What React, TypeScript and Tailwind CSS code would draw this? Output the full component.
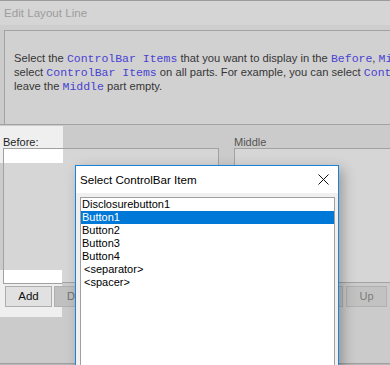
import React from 'react';

const Code = ({ children }: { children: React.ReactNode }) => (
  <span className="font-['Liberation_Mono','Courier_New',monospace] text-[11.5px] leading-none text-[#4a42d2]">{children}</span>
);

const items = ['Disclosurebutton1', 'Button1', 'Button2', 'Button3', 'Button4', '<separator>', '<spacer>'];

export default function App() {
  return (
    <div className="relative w-[390px] h-[365px] overflow-hidden bg-[#cbcbcb] font-['Liberation_Sans',Arial,sans-serif] flex flex-col">
      {/* dimmed window behind */}
      <div className="h-[25px] shrink-0 border-t border-[#9c9c9c] bg-[#d5d5d5] flex items-center pl-[4px] text-[11.6px] text-[#9d9d9d]">
        Edit Layout Line
      </div>
      <div className="h-[5px] shrink-0 bg-[#cecece]" />
      <div className="shrink-0 border-b border-[#a3a3a3]">
        <div className="ml-[4px] h-[94px] border-t border-l border-[#a3a3a3] bg-[#d1d1d1] pt-[20px] pl-[9px] text-[11.2px] leading-[14px] text-[#363636] whitespace-nowrap overflow-hidden">
          <div>
            Select the <Code>ControlBar Items</Code> that you want to display in the <Code>Before</Code>, <Code>Middle</Code> and <Code>After</Code> parts.
          </div>
          <div>
            select <Code>ControlBar Items</Code> on all parts. For example, you can select <Code>ControlBar Items</Code> for
          </div>
          <div>
            leave the <Code>Middle</Code> part empty.
          </div>
        </div>
      </div>

      <div className="flex px-[3px] pt-[11px] gap-[15px] shrink-0">
        <div className="w-[216px] shrink-0">
          <div className="h-[12px] leading-[12px] text-[11px] text-[#3a3a3a]">Before:</div>
          <div className="h-[135px] border border-[#a2a2a2] bg-[#d6d6d6]" />
          <div className="mt-[3px] ml-[2px] flex gap-[2px]">
            <div className="w-[47px] h-[21px] border border-[#ababab] bg-[#bfbfbf] flex items-center justify-center text-[11px] text-[#444]">Add</div>
            <div className="w-[58px] h-[21px] border border-[#b0b0b0] bg-[#c0c0c0] flex items-center justify-center text-[11px] text-[#6e6e6e]">Delete</div>
          </div>
        </div>
        <div className="w-[200px] shrink-0">
          <div className="h-[12px] leading-[12px] text-[11px] text-[#555]">Middle</div>
          <div className="h-[135px] border border-[#a2a2a2] bg-[#d6d6d6]" />
          <div className="mt-[3px] pl-[24px] flex gap-[3px]">
            {['Add', 'Delete', 'Up', 'Down'].map((b) => (
              <div key={b} className="w-[41px] h-[21px] shrink-0 border border-[#b0b0b0] bg-[#c2c2c2] flex items-center justify-center text-[11px] text-[#7c7c7c]">
                {b}
              </div>
            ))}
          </div>
        </div>
      </div>
      <div className="flex-1" />
      <div className="h-[2px] shrink-0 border-t border-[#a0a0a0] bg-[#b8b8b8]" />

      {/* spotlight over the Before label */}
      <div className="absolute left-0 top-[126px] w-[63px] h-[37px] bg-[#efefef] overflow-hidden pt-[10px] pl-[3px]">
        <div className="h-[12px] leading-[12px] text-[11px] text-[#1e1e1e]">Before:</div>
        <div className="h-[15px] w-[60px] border-l border-t border-[#a0a0a0] bg-white" />
      </div>

      {/* spotlight over the Add button */}
      <div className="absolute left-0 top-[270px] w-[62px] h-[47px] bg-[#efefef] overflow-hidden pl-[3px]">
        <div className="h-[14px] w-[59px] border-l border-b border-[#a0a0a0] bg-white" />
        <div className="mt-[2px] ml-[2px] flex gap-[2px]">
          <div className="w-[47px] h-[21px] shrink-0 border border-[#adadad] bg-[#e1e1e1] flex items-center justify-center text-[11.5px] text-[#111]">Add</div>
          <div className="w-[58px] h-[21px] shrink-0 border border-[#b0b0b0] bg-[#c0c0c0]" />
        </div>
      </div>

      {/* Select ControlBar Item dialog */}
      <div className="absolute left-[75px] top-[165px] w-[264px] h-[215px] border border-[#1883d7] bg-[#f0f0f0] shadow-[4px_4px_12px_rgba(0,0,0,0.28)] flex flex-col">
        <div className="h-[27px] shrink-0 bg-white flex items-center justify-between pl-[4px] pr-[9px]">
          <span className="text-[11.6px] text-black">Select ControlBar Item</span>
          <svg width="11" height="11" viewBox="0 0 11 11">
            <path d="M0.5 0.5 L10.5 10.5 M10.5 0.5 L0.5 10.5" stroke="#111" strokeWidth="1" />
          </svg>
        </div>
        <div className="h-[4px] shrink-0" />
        <div className="ml-[4px] mr-[3px] flex-1 border border-[#a0a0a0] bg-white">
          {items.map((it, i) => (
            <div
              key={it}
              className={
                i === 1
                  ? 'h-[13px] leading-[13px] pl-[1px] text-[11px] bg-[#0078d7] text-white'
                  : i >= 5
                    ? 'h-[13px] leading-[13px] pl-[3px] text-[11px] text-black'
                    : 'h-[13px] leading-[13px] pl-[1px] text-[11px] text-black'
              }
            >
              {it}
            </div>
          ))}
        </div>
      </div>
    </div>
  );
}
